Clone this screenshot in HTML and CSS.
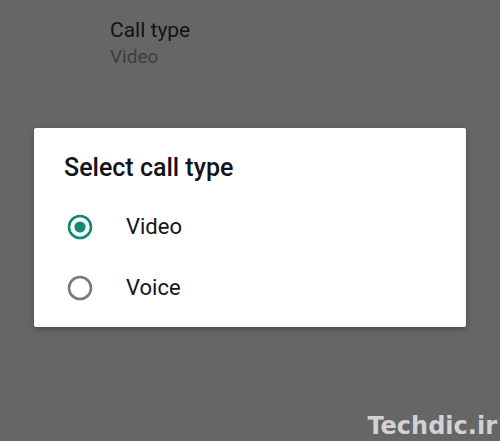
FILE: index.html
```html
<!DOCTYPE html>
<html>
<head>
<meta charset="utf-8">
<link rel="stylesheet" href="styles.css">
</head>
<body>
<div class="screen">
  <div class="setting">
    <div class="setting-title">Call type</div>
    <div class="setting-value">Video</div>
  </div>
  <div class="dialog">
    <div class="dialog-title">Select call type</div>
    <div class="option">
      <svg class="radio" width="26" height="26" viewBox="0 0 26 26"><circle cx="13" cy="13" r="11" fill="none" stroke="#128a72" stroke-width="2.6"/><circle cx="13" cy="13" r="5.6" fill="#128a72"/></svg>
      <span class="option-label">Video</span>
    </div>
    <div class="option">
      <svg class="radio" width="26" height="26" viewBox="0 0 26 26"><circle cx="13" cy="13" r="11" fill="none" stroke="#7a7a7a" stroke-width="2.6"/></svg>
      <span class="option-label">Voice</span>
    </div>
  </div>
  <div class="watermark">Techdic.ir</div>
</div>
</body>
</html>
```

FILE: styles.css
```css
html, body {
  margin: 0;
  padding: 0;
}
body {
  background: #666666;
  font-family: Roboto, "Noto Sans", sans-serif;
}
.screen {
  position: relative;
  width: 500px;
  height: 441px;
  overflow: hidden;
}
.setting {
  padding: 18px 0 0 110px;
  height: 110px;
  box-sizing: border-box;
}
.setting-title {
  font-size: 21px;
  line-height: 24px;
  color: #121314;
}
.setting-value {
  margin-top: 4px;
  font-size: 19px;
  line-height: 22px;
  color: #3b3e41;
}
.dialog {
  margin: 18px 0 0 34px;
  width: 432px;
  height: 199px;
  box-sizing: border-box;
  background: #ffffff;
  border-radius: 2px;
  box-shadow: 0 2px 6px rgba(0, 0, 0, 0.25);
  padding: 25px 0 0 0;
}
.dialog-title {
  padding-left: 30px;
  font-size: 25px;
  line-height: 30px;
  font-weight: 500;
  color: #111418;
  margin-bottom: 13px;
}
.option {
  display: flex;
  align-items: center;
  height: 61px;
  padding-left: 33px;
}
.radio {
  flex: none;
  display: block;
}
.option-label {
  margin-left: 33px;
  font-size: 22px;
  color: #141618;
}
.watermark {
  position: absolute;
  right: 3px;
  bottom: 1px;
  font-family: "DejaVu Sans", sans-serif;
  font-weight: bold;
  font-size: 24px;
  line-height: 28px;
  color: #d2d2d2;
}
```
